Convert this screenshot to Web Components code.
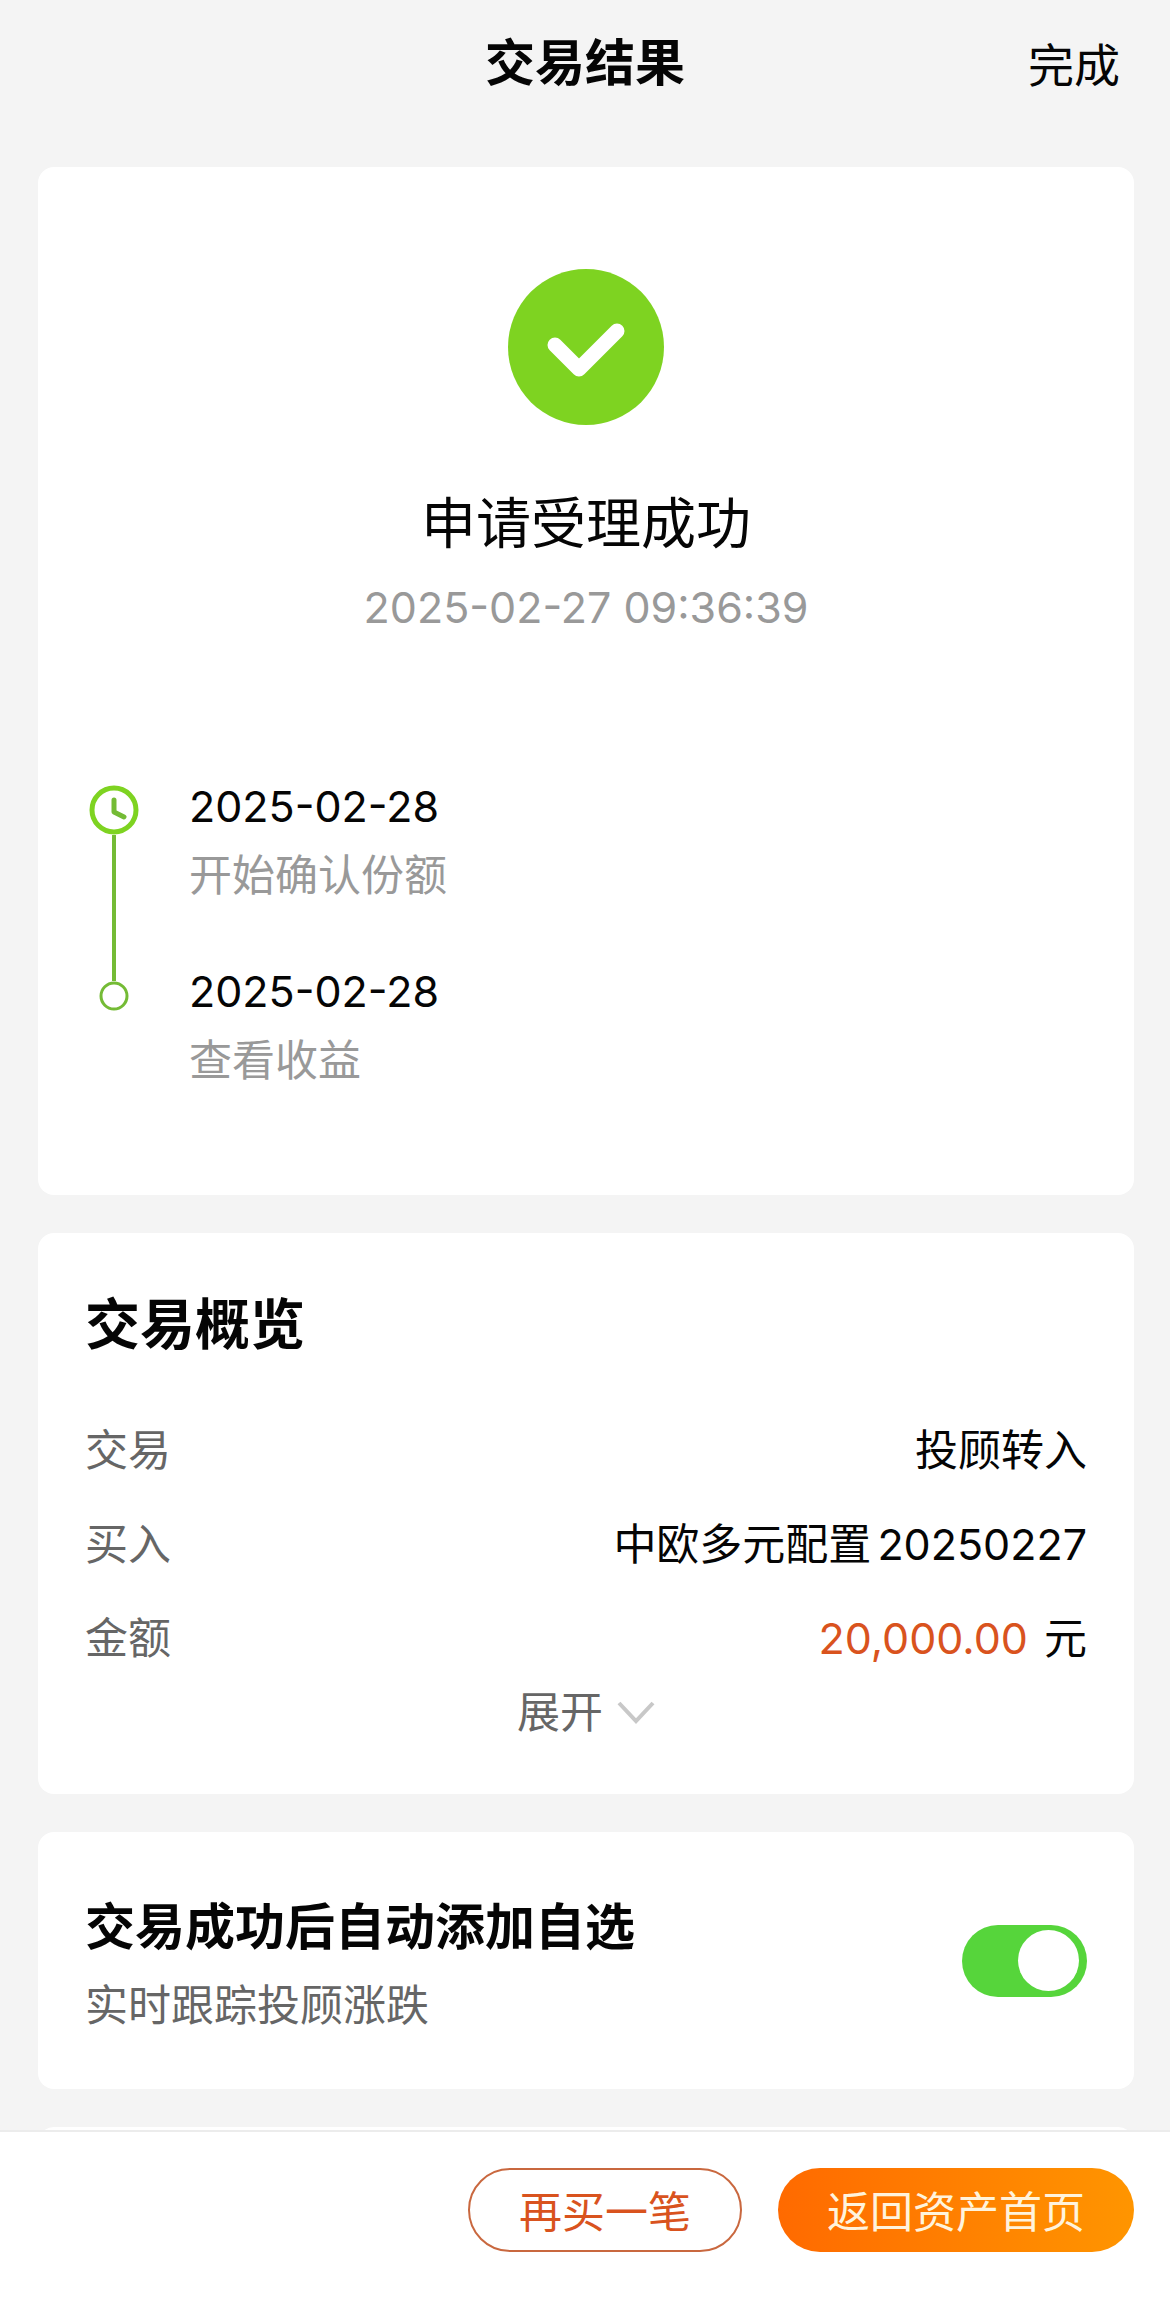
<!DOCTYPE html>
<html lang="zh-CN">
<head>
<meta charset="utf-8">
<meta name="viewport" content="width=device-width, initial-scale=1">
<title>交易结果</title>
<style>
  html, body { height: 100%; }
  body {
    margin: 0;
    background: #f4f4f4;
    color: #050505;
    font: 400 43px/56px Inter, "Noto Sans CJK SC", sans-serif;
    --muted: #999;
    --label: #666;
    --accent: #d9531e;
    --green: #7ed321;
    --line: #74bb35;
  }
</style>
</head>
<body>
<result-page>
  <top-bar slot="header" heading="交易结果" action="完成"></top-bar>

  <info-card>
    <result-status heading="申请受理成功" time="2025-02-27 09:36:39"></result-status>
    <progress-step kind="clock" date="2025-02-28">开始确认份额</progress-step>
    <progress-step kind="last" date="2025-02-28">查看收益</progress-step>
  </info-card>

  <info-card>
    <trade-overview heading="交易概览" more="展开">
      <info-row label="交易">投顾转入</info-row>
      <info-row label="买入">中欧多元配置<span class="code">20250227</span></info-row>
      <info-row label="金额" amount="20,000.00">元</info-row>
    </trade-overview>
  </info-card>

  <info-card>
    <switch-row heading="交易成功后自动添加自选" hint="实时跟踪投顾涨跌"></switch-row>
  </info-card>

  <info-card><next-panel></next-panel></info-card>

  <pill-button slot="footer">再买一笔</pill-button>
  <pill-button slot="footer" primary>返回资产首页</pill-button>
</result-page>

<script>
  const define = (name, render) => customElements.define(name, class extends HTMLElement {
    connectedCallback() {
      if (this.shadowRoot) return;
      this.attachShadow({ mode: 'open' }).innerHTML = render(key => this.getAttribute(key) ?? '');
    }
  });

  define('result-page', () => `
    <style>
      :host { display: flex; flex-direction: column; height: 100vh; }
      main {
        flex: 1; min-height: 0; overflow-y: auto; scrollbar-width: none;
        display: flex; flex-direction: column; gap: 38px;
        padding: 41px 36px 0 38px;
      }
      footer {
        display: flex; justify-content: flex-end; gap: 36px;
        padding: 36px 36px 53px;
        background: #fff; border-top: 2px solid #ececec;
      }
    </style>
    <slot name="header"></slot>
    <main><slot></slot></main>
    <footer><slot name="footer"></slot></footer>`);

  define('top-bar', get => `
    <style>
      :host { display: block; }
      header {
        display: grid; grid-template-columns: 1fr auto 1fr; align-items: center;
        height: 126px; padding: 0 50px;
      }
      h1 { grid-column: 2; margin: 0; font-size: 50px; line-height: 64px; font-weight: 600; }
      button {
        justify-self: end; padding: 4px 0 0; border: 0; background: none;
        font: inherit; font-size: 46px; color: inherit;
      }
    </style>
    <header><h1>${get('heading')}</h1><button type="button">${get('action')}</button></header>`);

  define('info-card', () => `
    <style>
      :host { display: block; flex: none; padding: 0 47px; background: #fff; border-radius: 16px; }
    </style>
    <slot></slot>`);

  define('result-status', get => `
    <style>
      :host { display: flex; flex-direction: column; align-items: center; padding: 102px 0 143px; }
      svg { width: 156px; height: 156px; }
      h2 { margin: 62px 0 20px; font-size: 55px; line-height: 72px; font-weight: 400; }
      time { color: var(--muted); }
    </style>
    <svg viewBox="0 0 156 156" aria-hidden="true">
      <circle cx="78" cy="78" r="78" fill="#7ed321"/>
      <path d="M47 76 L71 100 L109 62" fill="none" stroke="#fff" stroke-width="15" stroke-linecap="round" stroke-linejoin="round"/>
    </svg>
    <h2>${get('heading')}</h2>
    <time>${get('time')}</time>`);

  define('progress-step', get => {
    const clock = get('kind') === 'clock';
    const marker = clock
      ? `<svg width="50" height="50" viewBox="0 0 50 50" aria-hidden="true">
           <circle cx="25" cy="25" r="22" fill="none" stroke="var(--green)" stroke-width="5"/>
           <path d="M25 15 V27 L35 32" fill="none" stroke="var(--line)" stroke-width="5" stroke-linecap="round" stroke-linejoin="round"/>
         </svg><i class="fill"></i>`
      : `<i class="stub"></i><svg width="30" height="30" viewBox="0 0 30 30" aria-hidden="true">
           <circle cx="15" cy="15" r="13" fill="none" stroke="var(--line)" stroke-width="3"/>
         </svg>`;
    return `
    <style>
      :host { display: flex; gap: 46px; }
      .rail { display: flex; flex-direction: column; align-items: center; width: 58px; padding-top: ${clock ? 7 : 0}px; }
      svg { display: block; flex: none; }
      i { width: 4px; background: var(--line); }
      .fill { flex: 1; }
      .stub { height: 18px; }
      .text { display: flex; flex-direction: column; gap: 13px; padding-bottom: ${clock ? 60 : 107}px; }
      .note { color: var(--muted); }
    </style>
    <div class="rail">${marker}</div>
    <div class="text"><time>${get('date')}</time><span class="note"><slot></slot></span></div>`;
  });

  define('trade-overview', get => `
    <style>
      :host { display: flex; flex-direction: column; padding: 55px 0 54px; }
      h2 { margin: 0 0 62px; font-size: 55px; line-height: 72px; font-weight: 700; }
      .rows { display: flex; flex-direction: column; gap: 38px; }
      button {
        align-self: center; display: flex; align-items: center; gap: 14px;
        margin-top: 18px; padding: 0; border: 0; background: none; font: inherit; color: var(--label);
      }
    </style>
    <h2>${get('heading')}</h2>
    <div class="rows"><slot></slot></div>
    <button type="button" aria-expanded="false">${get('more')}
      <svg width="38" height="24" viewBox="0 0 38 24" aria-hidden="true">
        <path d="M2 3 L19 21 L36 3" fill="none" stroke="#c8c8c8" stroke-width="4"/>
      </svg>
    </button>`);

  define('info-row', get => `
    <style>
      :host { display: block; }
      dl { display: flex; justify-content: space-between; margin: 0; }
      dt { color: var(--label); }
      dd { margin: 0; }
      .amount { color: var(--accent); margin-right: 4px; }
      ::slotted(.code) { margin-left: 6px; }
    </style>
    <dl><dt>${get('label')}</dt><dd>${get('amount') ? `<span class="amount">${get('amount')}</span> ` : ''}<slot></slot></dd></dl>`);

  define('switch-row', get => `
    <style>
      :host { display: flex; align-items: center; justify-content: space-between; }
      .text { display: flex; flex-direction: column; gap: 18px; padding: 63px 0 56px; }
      label { font-size: 50px; line-height: 64px; font-weight: 600; }
      .hint { color: var(--label); }
      input {
        appearance: none; flex: none; display: flex; align-items: center;
        box-sizing: border-box; width: 125px; height: 72px; margin: 0; padding: 0 8px;
        border-radius: 36px; background: #d8d8d8;
      }
      input::before { content: ""; width: 61px; height: 61px; border-radius: 50%; background: #fff; }
      input:checked { justify-content: flex-end; background: #56d53b; }
    </style>
    <div class="text"><label for="watch">${get('heading')}</label><span class="hint" id="hint">${get('hint')}</span></div>
    <input id="watch" type="checkbox" role="switch" aria-describedby="hint" checked>`);

  define('next-panel', () => `<style>:host { display: block; height: 120px; }</style>`);

  define('pill-button', () => `
    <style>
      :host { display: block; }
      button {
        box-sizing: border-box; height: 84px; padding: 3px 49px 0; border-radius: 42px;
        border: 2px solid #c9683f; background: #fff; color: var(--accent);
        font: inherit; white-space: nowrap;
      }
      :host([primary]) button {
        border: 0; color: #fff3dc;
        background: linear-gradient(90deg, #ff6a00, #ff9500);
      }
    </style>
    <button type="button"><slot></slot></button>`);
</script>
</body>
</html>
